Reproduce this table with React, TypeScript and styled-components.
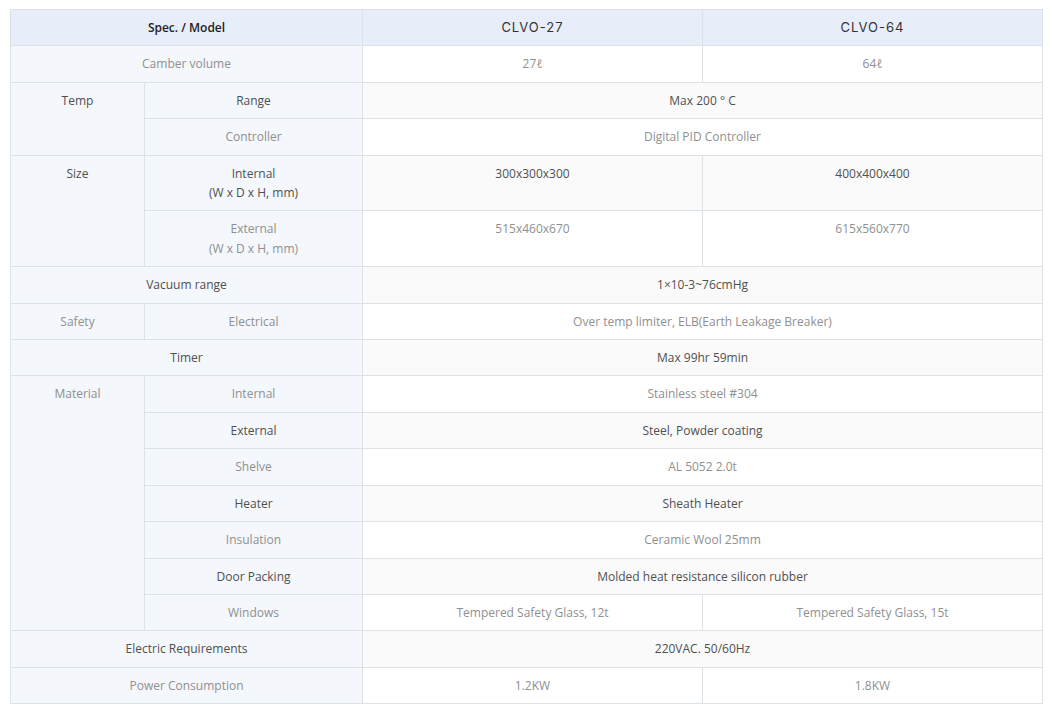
import React from "react";
import styled, { createGlobalStyle } from "styled-components";

const Global = createGlobalStyle`
  html, body { margin: 0; padding: 0; background: #fff; }
  body { font-family: "Open Sans", "Liberation Sans", sans-serif; }
`;

const Page = styled.div`
  padding: 9px 10px;
`;

const Table = styled.table`
  width: 1033px;
  border-collapse: collapse;
  table-layout: fixed;
  font-size: 12px;
  line-height: 19.4px;
  text-align: center;
`;

const HeadCell = styled.th<{ $model?: boolean }>`
  background: #e8eef9;
  border: 1px solid #dde2e8;
  padding: 8px 10px;
  font-weight: ${(p) => (p.$model ? 400 : 600)};
  color: ${(p) => (p.$model ? "#333" : "#222")};
  font-family: ${(p) =>
    p.$model ? `Inter, "Noto Sans", sans-serif` : `"Open Sans", sans-serif`};
  font-size: ${(p) => (p.$model ? "13px" : "12px")};
  letter-spacing: ${(p) => (p.$model ? "1px" : "0")};
`;

const Row = styled.tr`
  color: #909090;
  & > td { background: #ffffff; }
  &:nth-child(even) { color: #505050; }
  &:nth-child(even) > td { background: #fafafa; }
`;

const Label = styled.th`
  background: #f4f7fb;
  border: 1px solid #dde2e8;
  padding: 8px 10px;
  font-weight: 400;
  vertical-align: top;
`;

const Value = styled.td`
  border: 1px solid #dde2e8;
  padding: 8px 10px;
  vertical-align: top;
`;

export default function App() {
  return (
    <Page>
      <Global />
      <Table>
        <colgroup>
          <col style={{ width: 134 }} />
          <col style={{ width: 218 }} />
          <col style={{ width: 340 }} />
          <col style={{ width: 340 }} />
        </colgroup>
        <thead>
          <tr>
            <HeadCell colSpan={2}>Spec. / Model</HeadCell>
            <HeadCell $model>CLVO-27</HeadCell>
            <HeadCell $model>CLVO-64</HeadCell>
          </tr>
        </thead>
        <tbody>
          <Row>
            <Label colSpan={2}>Camber volume</Label>
            <Value>27ℓ</Value>
            <Value>64ℓ</Value>
          </Row>
          <Row>
            <Label rowSpan={2}>Temp</Label>
            <Label>Range</Label>
            <Value colSpan={2}>Max 200 ° C</Value>
          </Row>
          <Row>
            <Label>Controller</Label>
            <Value colSpan={2}>Digital PID Controller</Value>
          </Row>
          <Row>
            <Label rowSpan={2}>Size</Label>
            <Label>
              Internal
              <br />
              (W x D x H, mm)
            </Label>
            <Value>300x300x300</Value>
            <Value>400x400x400</Value>
          </Row>
          <Row>
            <Label>
              External
              <br />
              (W x D x H, mm)
            </Label>
            <Value>515x460x670</Value>
            <Value>615x560x770</Value>
          </Row>
          <Row>
            <Label colSpan={2}>Vacuum range</Label>
            <Value colSpan={2}>1×10-3~76cmHg</Value>
          </Row>
          <Row>
            <Label>Safety</Label>
            <Label>Electrical</Label>
            <Value colSpan={2}>Over temp limiter, ELB(Earth Leakage Breaker)</Value>
          </Row>
          <Row>
            <Label colSpan={2}>Timer</Label>
            <Value colSpan={2}>Max 99hr 59min</Value>
          </Row>
          <Row>
            <Label rowSpan={7}>Material</Label>
            <Label>Internal</Label>
            <Value colSpan={2}>Stainless steel #304</Value>
          </Row>
          <Row>
            <Label>External</Label>
            <Value colSpan={2}>Steel, Powder coating</Value>
          </Row>
          <Row>
            <Label>Shelve</Label>
            <Value colSpan={2}>AL 5052 2.0t</Value>
          </Row>
          <Row>
            <Label>Heater</Label>
            <Value colSpan={2}>Sheath Heater</Value>
          </Row>
          <Row>
            <Label>Insulation</Label>
            <Value colSpan={2}>Ceramic Wool 25mm</Value>
          </Row>
          <Row>
            <Label>Door Packing</Label>
            <Value colSpan={2}>Molded heat resistance silicon rubber</Value>
          </Row>
          <Row>
            <Label>Windows</Label>
            <Value>Tempered Safety Glass, 12t</Value>
            <Value>Tempered Safety Glass, 15t</Value>
          </Row>
          <Row>
            <Label colSpan={2}>Electric Requirements</Label>
            <Value colSpan={2}>220VAC. 50/60Hz</Value>
          </Row>
          <Row>
            <Label colSpan={2}>Power Consumption</Label>
            <Value>1.2KW</Value>
            <Value>1.8KW</Value>
          </Row>
        </tbody>
      </Table>
    </Page>
  );
}
